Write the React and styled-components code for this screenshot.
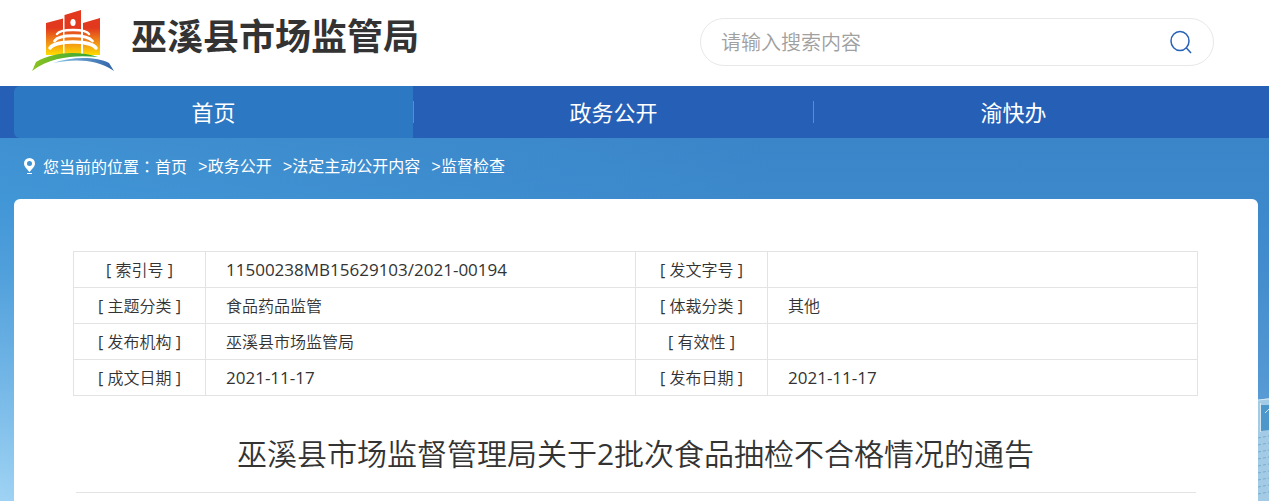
import React, { useState } from 'react';
import styled, { createGlobalStyle } from 'styled-components';

const GlobalStyle = createGlobalStyle`
  * {
    box-sizing: border-box;
  }
  body {
    margin: 0;
    color: #333;
    background: #fff;
    font-family: "Open Sans", "Noto Sans CJK SC", sans-serif;
    font-size: 16px;
    line-height: 24px;
  }
  a {
    color: inherit;
    text-decoration: none;
  }
`;

const Container = styled.div`
  margin: 0 11px 0 14px;
`;

const HeaderInner = styled(Container)`
  display: flex;
  align-items: flex-start;
  justify-content: space-between;
  height: 86px;
  padding: 0 44px 0 18px;
`;

const Brand = styled.a`
  display: flex;
  gap: 17px;
`;

const LogoArt = styled.svg`
  width: 82px;
  height: 64px;
  margin-top: 9px;
`;

const SiteName = styled.h1`
  margin: 10px 0 0;
  font-size: 36px;
  line-height: 54px;
  font-weight: 700;
`;

const SearchBox = styled.form`
  display: flex;
  align-items: center;
  width: 514px;
  height: 48px;
  margin-top: 18px;
  padding: 0 20px;
  border: 1px solid #e8e8e8;
  border-radius: 24px;
`;

const SearchInput = styled.input`
  flex: 1;
  min-width: 0;
  padding: 0;
  border: 0;
  outline: 0;
  background: none;
  color: #333;
  font: 350 20px/30px "Noto Sans CJK SC", sans-serif;
  &::placeholder {
    color: #a0a0a0;
    opacity: 1;
  }
`;

const SearchButton = styled.button`
  display: flex;
  padding: 0;
  border: 0;
  background: none;
  cursor: pointer;
`;

const Nav = styled.nav`
  background: #265fb6;
`;

const NavList = styled(Container)`
  display: flex;
  padding-right: 44px;
`;

const NavItem = styled.a`
  /* one main menu entry, with a short divider on its right */
  flex: 1;
  display: flex;
  align-items: center;
  justify-content: flex-end;
  height: 52px;
  color: #fff;
  font-size: 22px;
  line-height: 32px;
  border-radius: ${(props) => (props.$active ? '6px 0 0 6px' : '0')};
  background: ${(props) =>
    props.$active ? 'linear-gradient(to left, #265fb6 1px, #2d78c3 1px)' : 'none'};
  &::after {
    content: '';
    width: 1px;
    height: 22px;
    background: #5d8bd0;
  }
  &:last-child::after {
    background: none;
  }
`;

const NavLabel = styled.span`
  flex: 1;
  text-align: center;
`;

const Main = styled.main`
  position: relative;
  min-height: calc(100vh - 138px);
  /* sky: lighter towards the bottom, a little deeper on the right */
  background:
    linear-gradient(to right, rgba(54, 122, 192, 0) 0, rgba(54, 122, 192, 0.5) 60%),
    linear-gradient(to bottom, #3f90d1 0, #4196d6 60px, #4f9fdb 130px, #72b6e6 240px, #9fd3f4 363px);
`;

const Skyline = styled.svg`
  position: absolute;
  right: 0;
  top: 0;
  width: 40px;
  height: 363px;
`;

const Breadcrumb = styled(Container)`
  display: flex;
  align-items: center;
  height: 61px;
  padding: 0 0 4px 9px;
  color: #fff;
`;

const Pin = styled.svg`
  width: 13px;
  height: 17px;
  margin-right: 7px;
`;

const Crumb = styled.a`
  &:not(:last-child) {
    margin-right: 11px;
  }
`;

const Arrow = styled.span`
  font-family: "Liberation Mono", monospace;
`;

const Colon = styled.span`
  font-family: "Noto Sans CJK TC", sans-serif;
  line-height: 1;
`;

const Card = styled(Container)`
  position: relative;
  min-height: calc(100vh - 199px);
  padding: 52px 60px 0 59px;
  background: #fff;
  border-radius: 6px 6px 0 0;
`;

const InfoTable = styled.table`
  width: 100%;
  border-collapse: collapse;
  table-layout: fixed;
`;

const LabelCell = styled.th`
  width: 132px;
  height: 36px;
  padding: 0;
  border: 1px solid #e3e3e3;
  font-weight: 350;
  text-align: center;
`;

const ValueCell = styled.td`
  height: 36px;
  padding: 0 20px;
  border: 1px solid #e3e3e3;
  font-weight: ${(props) => (props.$code ? 400 : 350)};
  font-size: ${(props) => (props.$code ? '17px' : '16px')};
`;

const Title = styled.h2`
  margin: 35px 0 0;
  font-size: 30px;
  line-height: 46px;
  font-weight: 350;
  text-align: center;
`;

const Latin = styled.span`
  /* digits and brackets are too thin at the weight of the hanzi */
  font-weight: 400;
`;

const Rule = styled.hr`
  margin: 15px 2px 0 3px;
  border: 0;
  border-top: 1px solid #e3e3e3;
`;

const navItems = ['首页', '政务公开', '渝快办'];

const crumbs = ['首页', '政务公开', '法定主动公开内容', '监督检查'];

const rows = [
  [['索引号', '11500238MB15629103/2021-00194'], ['发文字号', '']],
  [['主题分类', '食品药品监管'], ['体裁分类', '其他']],
  [['发布机构', '巫溪县市场监管局'], ['有效性', '']],
  [['成文日期', '2021-11-17'], ['发布日期', '2021-11-17']],
];

const Logo = () => (
  <LogoArt viewBox="0 0 82 64" aria-hidden="true">
    <defs>
      <linearGradient id="tower" x1="0" y1="1" x2="0" y2="46" gradientUnits="userSpaceOnUse">
        <stop offset="0.4" stopColor="#e2381d" />
        <stop offset="0.7" stopColor="#f08a18" />
        <stop offset="1" stopColor="#ffdc00" />
      </linearGradient>
      <linearGradient id="hill">
        <stop offset="0" stopColor="#8cc320" />
        <stop offset="1" stopColor="#2aa239" />
      </linearGradient>
      <linearGradient id="river">
        <stop offset="0" stopColor="#8cc8ea" />
        <stop offset="1" stopColor="#2f62a8" />
      </linearGradient>
    </defs>
    <path fill="url(#tower)" d="M14 14 31 9.500V46H14ZM32.500 6 49 1V46H32.500ZM51 14 68 9V46H51Z" />
    <ellipse cx="41" cy="13.500" rx="2.600" ry="3.500" fill="#fff" />
    <g fill="none" stroke="#fff" strokeLinecap="round">
      <path strokeWidth="2.500" d="M25 25C28 19.500 54 19.500 57 25" />
      <path strokeWidth="2.800" d="M22.500 32C27 25 55 25 60.500 32" />
      <path strokeWidth="3.500" d="M18 39C23 31 59 31 64 39" />
    </g>
    <path fill="url(#hill)" d="M0 62C2 58 3 55 4 53 22 42 48 42 66 48 45 46 20 47 0 62Z" />
    <path fill="url(#river)" d="M21 54C42 47 65 48 77 54L82 62C64 50 43 50 21 54Z" />
  </LogoArt>
);

const App = () => {
  const [keyword, setKeyword] = useState('');

  return (
    <>
      <GlobalStyle />
      <header>
        <HeaderInner>
          <Brand href="#">
            <Logo />
            <SiteName>巫溪县市场监管局</SiteName>
          </Brand>
          <SearchBox onSubmit={(e) => e.preventDefault()}>
            <SearchInput
              aria-label="请输入搜索内容"
              placeholder="请输入搜索内容"
              value={keyword}
              onChange={(e) => setKeyword(e.target.value)}
            />
            <SearchButton type="submit" aria-label="搜索">
              <svg width="24" height="24" viewBox="0 0 24 24" fill="none" stroke="#2862b8" strokeWidth="1.5">
                <ellipse cx="11" cy="11" rx="9" ry="9.500" />
                <path d="M17 17.500 22 23" />
              </svg>
            </SearchButton>
          </SearchBox>
        </HeaderInner>
      </header>
      <Nav>
        <NavList>
          {navItems.map((item, i) => (
            <NavItem key={item} href="#" $active={i === 0}>
              <NavLabel>{item}</NavLabel>
            </NavItem>
          ))}
        </NavList>
      </Nav>
      <Main>
        <Skyline viewBox="0 0 40 363" aria-hidden="true">
          <path fill="#a3cbe5" d="M29 262 40 260V363H29Z" />
          <path fill="#4d97ca" d="M32 267H40V292L32 293Z" />
          <path stroke="#d3e7f3" d="M29 262 40 261M31.500 265V294M36 275 40 271" />
          <path
            fill="none"
            stroke="#79abcd"
            strokeDasharray="3 2"
            d="M29 300 40 298M29 307 40 305M29 314 40 312M29 321 40 319M29 328 40 326M29 335 40 333M29 342 40 340M29 349 40 347M29 356 40 354"
          />
        </Skyline>
        <Breadcrumb as="nav">
          <Pin viewBox="0 0 13 17" aria-hidden="true">
            <path
              fill="#fff"
              fillRule="evenodd"
              d="M6.500 0A5.500 5.500 0 0 1 12 5.500C12 8.500 9 11 6.500 14 4 11 1 8.500 1 5.500A5.500 5.500 0 0 1 6.500 0ZM6.500 3A2.500 2.500 0 1 0 6.500 8 2.500 2.500 0 0 0 6.500 3Z"
            />
            <path fill="#fff" d="M4 15H9V16H4Z" />
          </Pin>
          <span>
            您当前的位置<Colon lang="zh-TW">：</Colon>
          </span>
          {crumbs.map((crumb, i) => (
            <Crumb key={crumb} href="#">
              {i > 0 && <Arrow>&gt;</Arrow>}
              {crumb}
            </Crumb>
          ))}
        </Breadcrumb>
        <Card>
          <InfoTable>
            <colgroup>
              <col width="132" />
              <col />
              <col width="132" />
              <col />
            </colgroup>
            <tbody>
              {rows.map((row) => (
                <tr key={row[0][0]}>
                  {row.map(([label, value]) => (
                    <React.Fragment key={label}>
                      <LabelCell scope="row">
                        <Latin>[ </Latin>
                        {label}
                        <Latin> ]</Latin>
                      </LabelCell>
                      <ValueCell $code={/^\d/.test(value)}>{value}</ValueCell>
                    </React.Fragment>
                  ))}
                </tr>
              ))}
            </tbody>
          </InfoTable>
          <Title>
            巫溪县市场监督管理局关于<Latin>2</Latin>批次食品抽检不合格情况的通告
          </Title>
          <Rule />
        </Card>
      </Main>
    </>
  );
};

export default App;
